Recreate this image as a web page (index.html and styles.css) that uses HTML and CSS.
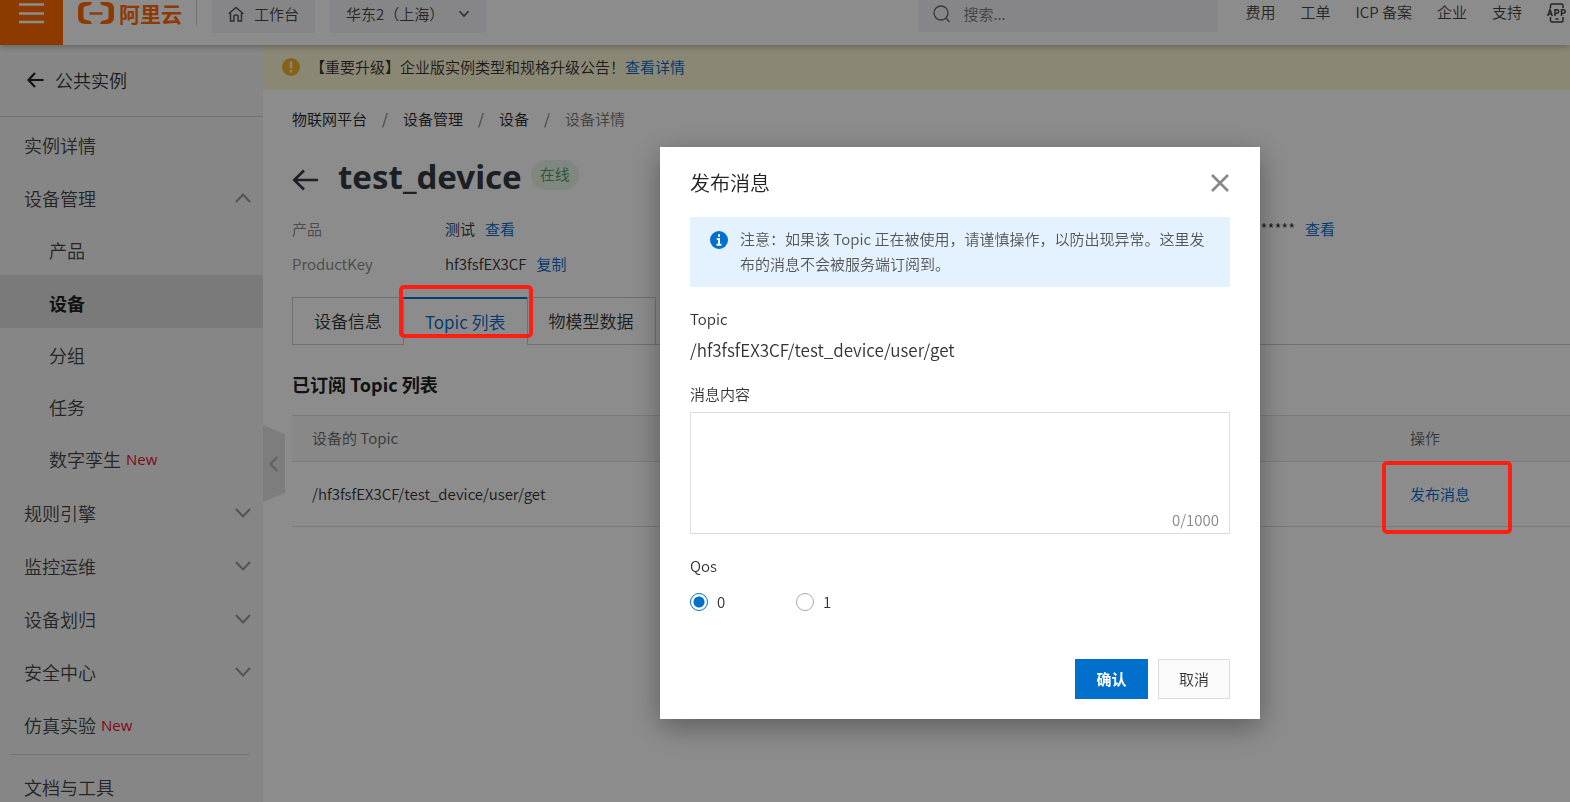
FILE: index.html
```html
<!DOCTYPE html>
<html lang="zh-CN">
<head>
<meta charset="utf-8">
<title>设备详情</title>
<link rel="stylesheet" href="styles.css">
</head>
<body>
<header class="topbar">
  <button class="menu-button" aria-label="菜单"><svg width="26" height="22" viewBox="0 0 26 22"><path d="M0 2.5h25M0 11.500h25M0 20h25" stroke="#fff" stroke-width="2.400"/></svg></button>
  <a class="brand" href="#">
    <svg width="38" height="24" viewBox="0 0 38 24" fill="none" stroke="#ff6a00"><path d="M15 1H8Q1 1 1 8v8q0 7 7 7h7l-1.500-3-5-1.200q-2-.6-2-2.300v-9q0-1.700 2-2.300l5-1.200zM23 1h7q7 0 7 7v8q0 7-7 7h-7l1.500-3 5-1.200q2-.6 2-2.300v-9q0-1.700-2-2.300l-5-1.200z" fill="#ff6a00" stroke="none"/><path d="M12.500 12.500h13" stroke-width="2.400"/></svg>
    <span>阿里云</span>
  </a>
  <button class="pill"><svg width="16" height="16" viewBox="0 0 16 16" fill="none" stroke="#555" stroke-width="1.500"><path d="M.7 7.700 8 1.500l7.300 6.200M2.500 7v8h3.400v-4.500q0-1.500 2.100-1.500t2.100 1.500V15h3.400V7"/></svg>工作台</button>
  <button class="pill region">华东2（上海）<svg width="12" height="8" viewBox="0 0 12 8" fill="none" stroke="#555" stroke-width="1.600"><path d="m1.500 1.200 4.500 4.800 4.500-4.800"/></svg></button>
  <label class="search">
    <svg width="18" height="18" viewBox="0 0 18 18" fill="none" stroke="#666" stroke-width="1.300"><circle cx="8" cy="8" r="7"/><path d="m13 13 3.500 4"/></svg>
    <input type="text" placeholder="搜索..." aria-label="搜索">
  </label>
  <nav class="top-nav">
    <a href="#">费用</a><a href="#">工单</a><a href="#">ICP 备案</a><a href="#">企业</a><a href="#">支持</a>
    <a href="#" aria-label="APP"><svg width="20" height="20" viewBox="0 0 20 20" fill="none" stroke="#444" stroke-width="1.500"><path d="M3.500 5V2.500Q3.500 1 5 1h9.500Q16 1 16 2.500V5M3.500 14v3.500Q3.500 19 5 19h9.500q1.500 0 1.500-1.500V14M8.500 16h3"/><path d="M.7 13 3 6.500 5.300 13M1.500 11h3M8 13V6.800h2q1.700 0 1.700 1.700T10 10.300H8M14.500 13V6.800h2q1.700 0 1.700 1.700t-1.700 1.800h-2"/></svg></a>
  </nav>
</header>

<div class="layout">
  <aside class="sidebar">
    <a class="instance" href="#"><svg width="17" height="16" viewBox="0 0 17 16" fill="none" stroke="#222" stroke-width="2.200"><path d="M16.500 8H2M8 1 1.500 8 8 15"/></svg>公共实例</a>
    <nav class="side-nav">
      <a href="#">实例详情</a>
      <a href="#">设备管理<svg class="chevron" width="16" height="10" viewBox="0 0 16 10"><path d="m1 9 7-7.500L15 9"/></svg></a>
      <div class="submenu">
        <a href="#">产品</a>
        <a class="active" href="#">设备</a>
        <a href="#">分组</a>
        <a href="#">任务</a>
        <a href="#">数字孪生<span class="new">New</span></a>
      </div>
      <a href="#">规则引擎<svg class="chevron" width="16" height="10" viewBox="0 0 16 10"><path d="m1 1 7 7.500L15 1"/></svg></a>
      <a href="#">监控运维<svg class="chevron" width="16" height="10" viewBox="0 0 16 10"><path d="m1 1 7 7.500L15 1"/></svg></a>
      <a href="#">设备划归<svg class="chevron" width="16" height="10" viewBox="0 0 16 10"><path d="m1 1 7 7.500L15 1"/></svg></a>
      <a href="#">安全中心<svg class="chevron" width="16" height="10" viewBox="0 0 16 10"><path d="m1 1 7 7.500L15 1"/></svg></a>
      <a href="#">仿真实验<span class="new">New</span></a>
      <hr>
      <a href="#">文档与工具</a>
    </nav>
    <button class="collapse" aria-label="收起"><svg width="9" height="16" viewBox="0 0 9 16" fill="none" stroke="#b0b0b0" stroke-width="2"><path d="M8 1 1.500 8 8 15"/></svg></button>
  </aside>

  <main class="main">
    <div class="notice"><svg width="18" height="18" viewBox="0 0 18 18"><circle cx="9" cy="9" r="9" fill="#f5b32e"/><path d="M9 3.500v7M9 12v2.500" stroke="#fdf6d6" stroke-width="2.400"/></svg><span>【重要升级】企业版实例类型和规格升级公告！<a href="#">查看详情</a></span></div>
    <div class="content">
      <nav class="crumbs"><a href="#">物联网平台</a><i>/</i><a href="#">设备管理</a><i>/</i><a href="#">设备</a><i>/</i><span>设备详情</span></nav>
      <div class="heading">
        <svg width="26" height="22" viewBox="0 0 26 22" fill="none" stroke="#333a40" stroke-width="2.600"><path d="M26 11H2.500M12 1.500 2.200 11 12 20.500"/></svg>
        <h1>test_device</h1>
        <span class="status">在线</span>
      </div>
      <div class="facts">
        <span class="key">产品</span><span>测试<a href="#">查看</a></span><span class="secret">*********<a href="#">查看</a></span>
        <span class="key">ProductKey</span><span>hf3fsfEX3CF<a href="#">复制</a></span>
      </div>
      <div class="tabs">
        <button>设备信息</button><button class="current">Topic 列表</button><button>物模型数据</button><span class="tabs-rest"></span>
      </div>
      <h2>已订阅 Topic 列表</h2>
      <table class="topics">
        <thead><tr><th>设备的 Topic</th><th class="action">操作</th></tr></thead>
        <tbody><tr><td>/hf3fsfEX3CF/test_device/user/get</td><td class="action"><a href="#">发布消息</a></td></tr></tbody>
      </table>
    </div>
  </main>
</div>

<div class="overlay">
  <form class="dialog" role="dialog" aria-labelledby="dialog-title">
    <div class="dialog-head"><h3 id="dialog-title">发布消息</h3><button type="button" class="close" aria-label="关闭"><svg width="18" height="18" viewBox="0 0 18 18" stroke="#888" stroke-width="2.600"><path d="m1 1 16 16M17 1 1 17"/></svg></button></div>
    <div class="tip"><svg width="18" height="18" viewBox="0 0 18 18"><circle cx="9" cy="9" r="9" fill="#0070cc"/><path d="M9 3.200v2.600M6.800 8H9v5.500M6.500 13.700h5" stroke="#fff" stroke-width="2" fill="none"/></svg><p>注意：如果该 Topic 正在被使用，请谨慎操作，以防出现异常。这里发布的消息不会被服务端订阅到。</p></div>
    <div class="label">Topic</div>
    <div class="topic-value">/hf3fsfEX3CF/test_device/user/get</div>
    <label class="label" for="message">消息内容</label>
    <div class="message"><textarea id="message"></textarea><span class="counter">0/1000</span></div>
    <div class="label">Qos</div>
    <div class="radios">
      <label><input type="radio" name="qos" checked>0</label>
      <label><input type="radio" name="qos">1</label>
    </div>
    <div class="buttons"><button type="button" class="confirm">确认</button><button type="button" class="cancel">取消</button></div>
  </form>
</div>
<div class="marker marker-tab"></div>
<div class="marker marker-publish"></div>
</body>
</html>
```

FILE: styles.css
```css
* { box-sizing: border-box; }
body {
  margin: 0;
  min-height: 100vh;
  display: flex;
  flex-direction: column;
  font: 350 15px/24px "Noto Sans CJK SC", sans-serif;
  color: #333;
  background: #fff;
}
html, body { overflow: hidden; height: 100%; }
a { color: #0064c8; text-decoration: none; }
button, input, textarea { font: inherit; color: inherit; margin: 0; padding: 0; border: 0; background: none; }
h1, h2, h3, p { margin: 0; }
svg { display: block; flex: none; }

.topbar {
  display: flex;
  align-items: flex-start;
  flex: none;
  height: 45px;
  background: #fff;
  box-shadow: 0 2px 6px rgba(0, 0, 0, .25);
  position: relative;
  z-index: 1;
}
.menu-button { width: 63px; height: 45px; padding: 2px 19px; background: #ff6a00; align-self: stretch; display: flex; }
.brand {
  display: flex;
  align-items: center;
  gap: 4px;
  width: 134px;
  height: 25px;
  margin-right: 15px;
  padding-left: 14px;
  border-right: 1px solid #ccc;
  color: #ff6a00;
  font-size: 21px;
  font-weight: 700;
}
.pill {
  display: flex;
  align-items: center;
  gap: 10px;
  height: 33px;
  padding: 0 16px 6px;
  margin-right: 15px;
  background: #f4f5f8;
  color: #444;
}
.region { width: 156px; justify-content: space-between; }
.search { display: flex; align-items: center; gap: 12px; width: 300px; height: 32px; margin-left: auto; padding: 0 15px 4px; background: #f4f5f8; }
.search input { flex: 1; min-width: 0; }
.search input::placeholder { color: #777; opacity: 1; }
.top-nav { display: flex; gap: 25px; padding: 0 3px 0 27px; }
.top-nav a { color: #444; }
.top-nav svg { margin-top: 3px; }

.layout { display: flex; flex: 1; min-height: 0; }
.sidebar { position: relative; flex: none; width: 263px; background: #f5f5f5; font-size: 18px; }
.instance { display: flex; align-items: center; gap: 11px; height: 72px; padding: 0 27px 2px; border-bottom: 1px solid #d0d0d0; color: #333; }
.side-nav > a, .submenu a { display: flex; align-items: center; height: 53px; padding: 2px 12px 0 24px; color: #444; }
.submenu { margin-bottom: 1px; }
.submenu a { height: 52px; padding-left: 49px; }
.submenu .active { height: 53px; background: #dedede; color: #222; font-weight: 700; }
.new { margin-left: 5px; color: #e8112d; font: 15px "Open Sans", sans-serif; }
.chevron { margin-left: auto; fill: none; stroke: #999; stroke-width: 2; }
.side-nav hr { height: 1px; margin: 4px 13px 4px 10px; border: 0; background: #d8d8d8; }
.collapse {
  position: absolute;
  left: 263px;
  top: 380px;
  width: 22px;
  height: 77px;
  padding-left: 6px;
  background: #e4e4e4;
  clip-path: polygon(0 0, 100% 12%, 100% 88%, 0 100%);
}

.main { flex: 1; min-width: 0; }
.notice { display: flex; align-items: center; gap: 10px; height: 45px; padding: 0 0 2px 19px; background: #fdf6d6; }
.content { padding: 17px 0 0 29px; }
.crumbs { display: flex; }
.crumbs a { color: #222; }
.crumbs i { width: 36px; text-align: center; font-style: normal; color: #666; }
.crumbs span { color: #777; }
.heading { display: flex; align-items: center; margin-top: 21px; height: 50px; }
.heading h1 { margin: 0 9px 0 20px; font: 700 33px/50px "Noto Sans", sans-serif; color: #333a40; }
.heading svg { margin-top: 6px; }
.status { padding: 2px 9px 4px; margin-bottom: 4px; border-radius: 15px; background: #e8f6ea; color: #4f9a58; }
.facts { display: grid; grid-template-columns: 153px 788px 1fr; grid-auto-rows: 35px; margin-top: 15px; }
.facts .key { color: #888; }
.facts a { margin-left: 10px; }
.secret { grid-column: 3; }
.tabs { display: flex; margin-top: 10px; font-size: 17px; }
.tabs button { height: 48px; padding: 0 21px; border: 1px solid #ccc; border-right: 0; }
.tabs .current { border-top: 2px solid #0070cc; border-bottom: 0; color: #0064c8; }
.tabs-rest { flex: 1; border-bottom: 1px solid #ccc; border-left: 1px solid #ccc; }
h2 { margin: 26px 0 18px; font-size: 18px; line-height: 26px; color: #222; }
.topics { width: 100%; border-collapse: collapse; }
.topics th { height: 46px; padding: 0 20px 2px; border: solid #e0e0e0; border-width: 1px 0; background: #f7f7f7; color: #666; font-weight: 350; text-align: left; }
.topics td { height: 65px; padding: 0 20px; border-bottom: 1px solid #e0e0e0; }
.topics .action { width: 180px; }

.overlay { position: fixed; inset: 0; z-index: 2; display: flex; justify-content: flex-end; align-items: flex-start; padding: 147px 310px 0 0; background: rgba(0, 0, 0, .45); }
.dialog { width: 600px; padding: 20px 30px; background: #fff; box-shadow: 0 8px 28px rgba(0, 0, 0, .35); }
.dialog-head { display: flex; align-items: center; justify-content: space-between; height: 32px; margin-bottom: 18px; }
.dialog-head h3 { font-size: 20px; font-weight: 350; color: #222; }
.close { padding-right: 1px; }
.tip { display: flex; gap: 12px; padding: 9px 20px 11px; margin-bottom: 20px; background: #e3f2fe; color: #555; line-height: 25px; }
.tip svg { margin-top: 5px; }
.label { display: block; }
.topic-value { margin: 5px 0 18px; font-size: 17px; line-height: 28px; }
.message { position: relative; margin: 6px 0 20px; }
.message textarea { display: block; width: 100%; height: 122px; padding: 8px 10px; border: 1px solid #ddd; resize: none; }
.counter { position: absolute; right: 11px; bottom: 2px; color: #888; }
.radios { display: flex; margin-top: 12px; }
.radios label { display: flex; align-items: center; gap: 9px; width: 106px; }
.radios input { appearance: none; width: 18px; height: 18px; border: 1px solid #aaa; border-radius: 50%; }
.radios input:checked { border-color: #0070cc; background: radial-gradient(circle, #0070cc 5px, #fff 6px); }
.buttons { display: flex; justify-content: flex-end; gap: 10px; margin-top: 45px; }
.buttons button { width: 73px; height: 40px; }
.confirm { background: #0070cc; color: #fff; font-weight: 700; }
.buttons .cancel { width: 72px; border: 1px solid #ddd; background: #fafafa; }

.marker { position: absolute; z-index: 3; border: 4px solid #ff1f12; border-radius: 5px; }
.marker-tab { left: 399px; top: 285px; width: 134px; height: 53px; }
.marker-publish { left: 1382px; top: 461px; width: 130px; height: 73px; }
```
